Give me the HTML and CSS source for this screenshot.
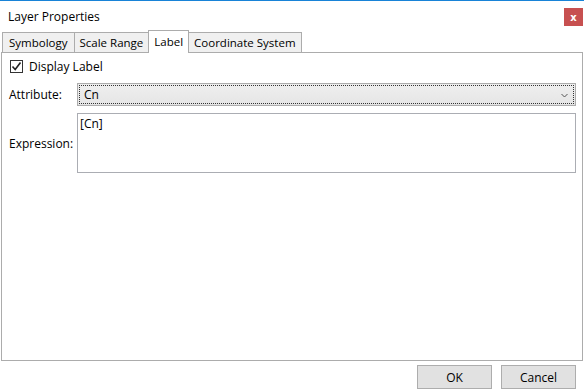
FILE: index.html
```html
<!DOCTYPE html>
<html>
<head>
<meta charset="utf-8">
<link rel="stylesheet" href="styles.css">
</head>
<body>
<div class="dialog">
  <div class="titlebar">
    <span class="title">Layer Properties</span>
    <span class="close">x</span>
  </div>
  <div class="tabs">
    <div class="tab tab-first">Symbology</div>
    <div class="tab">Scale Range</div>
    <div class="tab active">Label</div>
    <div class="tab">Coordinate System</div>
  </div>
  <div class="panel">
    <label class="check-row">
      <span class="checkbox">
        <svg width="11" height="11" viewBox="0 0 11 11"><path d="M1.5 5.5 L4.2 8.5 L9.5 1.5" fill="none" stroke="#222" stroke-width="1.6"/></svg>
      </span>
      <span>Display Label</span>
    </label>
    <div class="field-row">
      <span class="field-label">Attribute:</span>
      <div class="combo">
        <div class="combo-focus">
          <span>Cn</span>
          <svg class="chev" width="7" height="5" viewBox="0 0 7 5"><path d="M0.5 1 L3.5 4 L6.5 1" fill="none" stroke="#555" stroke-width="1"/></svg>
        </div>
      </div>
    </div>
    <div class="field-row expr-row">
      <span class="field-label">Expression:</span>
      <div class="textarea">[Cn]</div>
    </div>
  </div>
  <div class="buttons">
    <div class="btn">OK</div>
    <div class="btn">Cancel</div>
  </div>
</div>
</body>
</html>
```
FILE: styles.css
```css
* { box-sizing: border-box; }
html, body {
  margin: 0;
  padding: 0;
  background: #ffffff;
}
body {
  font-family: "Open Sans", "Noto Sans", sans-serif;
  font-size: 12px;
  color: #000;
  width: 584px;
  height: 392px;
  overflow: hidden;
}
.dialog {
  width: 584px;
  height: 392px;
  border-top: 1px solid #1883d7;
  display: flex;
  flex-direction: column;
}
.titlebar {
  height: 29px;
  flex: none;
  display: flex;
  align-items: center;
  justify-content: space-between;
  padding-left: 8px;
  padding-right: 1px;
}
.title {
  margin-top: 1px;
}
.close {
  width: 19px;
  height: 18px;
  background: #c75050;
  color: #fff;
  font-weight: bold;
  font-family: "DejaVu Sans", sans-serif;
  font-size: 10px;
  display: flex;
  align-items: center;
  justify-content: center;
  margin-top: 3px;
}
.tabs {
  display: flex;
  align-items: flex-end;
  height: 22px;
  flex: none;
  padding-left: 2px;
  font-size: 11.5px;
}
.tab {
  height: 20px;
  background: #f0f0f0;
  border: 1px solid #acacac;
  border-bottom: none;
  padding: 0 5px;
  display: flex;
  align-items: center;
  margin-right: -1px;
  line-height: 1;
}
.tab-first {
  padding: 0 6px;
}
.tab.active {
  background: #fff;
  position: relative;
  z-index: 1;
  margin-bottom: -1px;
  height: 23px;
  padding: 0 5px 1px 5px;
}
.panel {
  margin-left: 1px;
  margin-right: 1px;
  height: 309px;
  flex: none;
  border: 1px solid #acacac;
  background: #fff;
  padding: 5px 6px 0 7px;
}
.check-row {
  display: flex;
  align-items: center;
  height: 16px;
  margin-left: 1px;
}
.checkbox {
  width: 13px;
  height: 13px;
  border: 1px solid #333;
  background: #fff;
  display: flex;
  align-items: center;
  justify-content: center;
  margin-right: 6px;
}
.field-row {
  display: flex;
  align-items: center;
  margin-top: 9px;
}
.field-label {
  width: 68px;
  flex: none;
}
.combo {
  flex: 1;
  height: 23px;
  border: 1px solid #acacac;
  background: linear-gradient(#efefef, #e5e5e5);
  padding: 1px;
}
.combo-focus {
  height: 100%;
  border: 1px dotted #333;
  display: flex;
  align-items: center;
  justify-content: space-between;
  padding-left: 4px;
  padding-right: 5px;
}
.chev { margin-top: 1px; }
.expr-row {
  margin-top: 7px;
}
.textarea {
  flex: 1;
  height: 60px;
  border: 1px solid #abadb3;
  background: #fff;
  padding: 1px 2px;
}
.buttons {
  display: flex;
  justify-content: flex-end;
  gap: 9px;
  padding-right: 8px;
  margin-top: 4px;
}
.btn {
  width: 75px;
  height: 24px;
  background: #e1e1e1;
  border: 1px solid #adadad;
  display: flex;
  align-items: center;
  justify-content: center;
}
```
